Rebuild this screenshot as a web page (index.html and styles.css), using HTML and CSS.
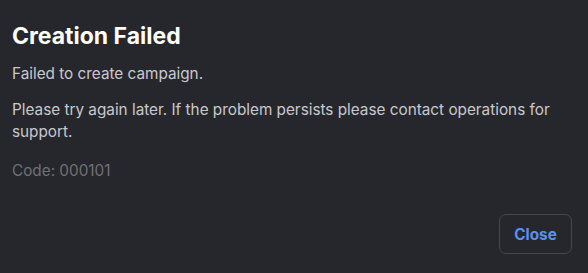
FILE: index.html
```html
<!DOCTYPE html>
<html>
<head>
<meta charset="utf-8">
<link rel="stylesheet" href="styles.css">
</head>
<body>
<div class="dialog">
  <h1 class="title">Creation Failed</h1>
  <p class="text">Failed to create campaign.</p>
  <p class="text">Please try again later. If the problem persists please contact operations for support.</p>
  <p class="code">Code: 000101</p>
  <div class="actions">
    <button class="btn">Close</button>
  </div>
</div>
</body>
</html>
```
FILE: styles.css
```css
html, body {
  margin: 0;
  padding: 0;
  background: #26272c;
}
.dialog {
  box-sizing: border-box;
  width: 588px;
  height: 273px;
  padding: 22px 16px 19px 12px;
  display: flex;
  flex-direction: column;
  font-family: Inter, "Noto Sans", sans-serif;
}
.title {
  margin: 0 0 13px;
  font-size: 23px;
  line-height: 28px;
  font-weight: 700;
  color: #ffffff;
}
.text {
  margin: 0 0 14px;
  font-size: 15.3px;
  line-height: 22px;
  color: #c9c9cd;
}
.text + .code {
  margin-top: 3px;
}
.code {
  margin: 0;
  font-size: 15.3px;
  line-height: 22px;
  color: #707176;
}
.actions {
  margin-top: auto;
  display: flex;
  justify-content: flex-end;
}
.btn {
  width: 73px;
  height: 40px;
  border: 1px solid #46474c;
  border-radius: 7px;
  background: transparent;
  color: #5b8ff0;
  font-family: Inter, "Noto Sans", sans-serif;
  font-size: 15.3px;
  font-weight: 700;
  cursor: pointer;
}
```
